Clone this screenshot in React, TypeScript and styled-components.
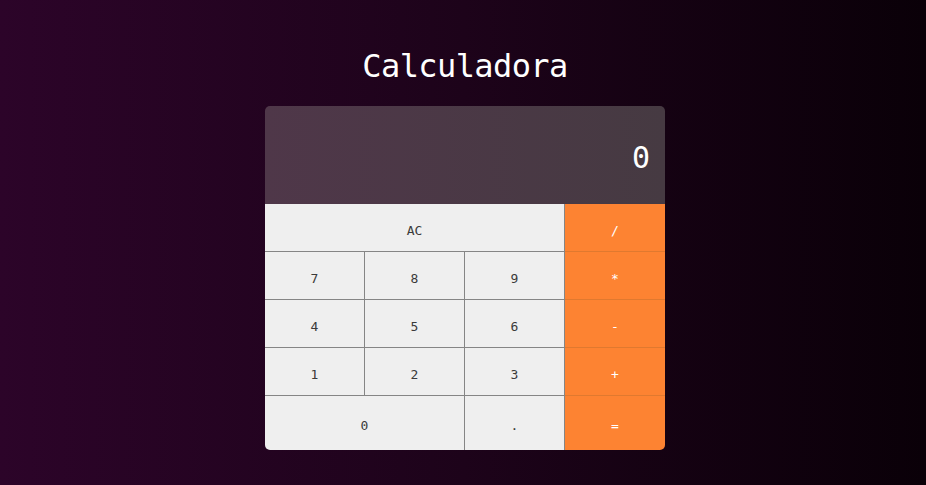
import React, { useState } from "react";
import styled, { createGlobalStyle } from "styled-components";

const Global = createGlobalStyle`
  html, body { margin: 0; padding: 0; }
  body {
    min-height: 485px;
    background: linear-gradient(to right, #2c0429 0%, #1d031a 50%, #0a0008 100%);
    font-family: "DejaVu Sans Mono", "Liberation Mono", monospace;
  }
`;

const Page = styled.div`
  display: flex;
  flex-direction: column;
  align-items: center;
  padding-top: 46px;
  padding-left: 4px;
  min-height: 485px;
  box-sizing: border-box;
`;

const Title = styled.h1`
  margin: 0 0 20px;
  height: 40px;
  line-height: 40px;
  font-size: 32px;
  font-weight: 400;
  color: #ffffff;
  letter-spacing: -0.6px;
`;

const Card = styled.div`
  width: 400px;
  border-radius: 5px;
  overflow: hidden;
  display: grid;
  grid-template-columns: repeat(4, 100px);
  grid-template-rows: 98px repeat(4, 48px) 54px;
`;

const Display = styled.div`
  grid-column: 1 / -1;
  background: linear-gradient(to right, #4f3749, #463a42);
  display: flex;
  align-items: center;
  justify-content: flex-end;
  padding: 4px 15px 0 0;
  color: #ffffff;
  font-size: 30px;
`;

const Key = styled.button<{ $span?: number; $op?: boolean; $last?: boolean; $bottom?: boolean }>`
  grid-column: span ${(p) => p.$span ?? 1};
  margin: 0;
  padding: 5px 0 0;
  border: none;
  border-bottom: ${(p) => (p.$bottom ? "none" : `1px solid ${p.$op ? "#e0792f" : "#858585"}`)};
  border-right: ${(p) => (p.$last || p.$op ? "none" : "1px solid #858585")};
  background: ${(p) => (p.$op ? "#fd8332" : "#efefef")};
  color: ${(p) => (p.$op ? "#ffffff" : "#3a3a3a")};
  font-family: "DejaVu Sans Mono", "Liberation Mono", monospace;
  font-size: 13px;
  cursor: pointer;
`;

export default function App() {
  const [value] = useState("0");
  return (
    <>
      <Global />
      <Page>
        <Title>Calculadora</Title>
        <Card>
          <Display>{value}</Display>
          <Key $span={3}>AC</Key>
          <Key $op>/</Key>
          <Key>7</Key>
          <Key>8</Key>
          <Key>9</Key>
          <Key $op>*</Key>
          <Key>4</Key>
          <Key>5</Key>
          <Key>6</Key>
          <Key $op>-</Key>
          <Key>1</Key>
          <Key>2</Key>
          <Key>3</Key>
          <Key $op>+</Key>
          <Key $span={2} $bottom>0</Key>
          <Key $bottom>.</Key>
          <Key $op $bottom>=</Key>
        </Card>
      </Page>
    </>
  );
}
